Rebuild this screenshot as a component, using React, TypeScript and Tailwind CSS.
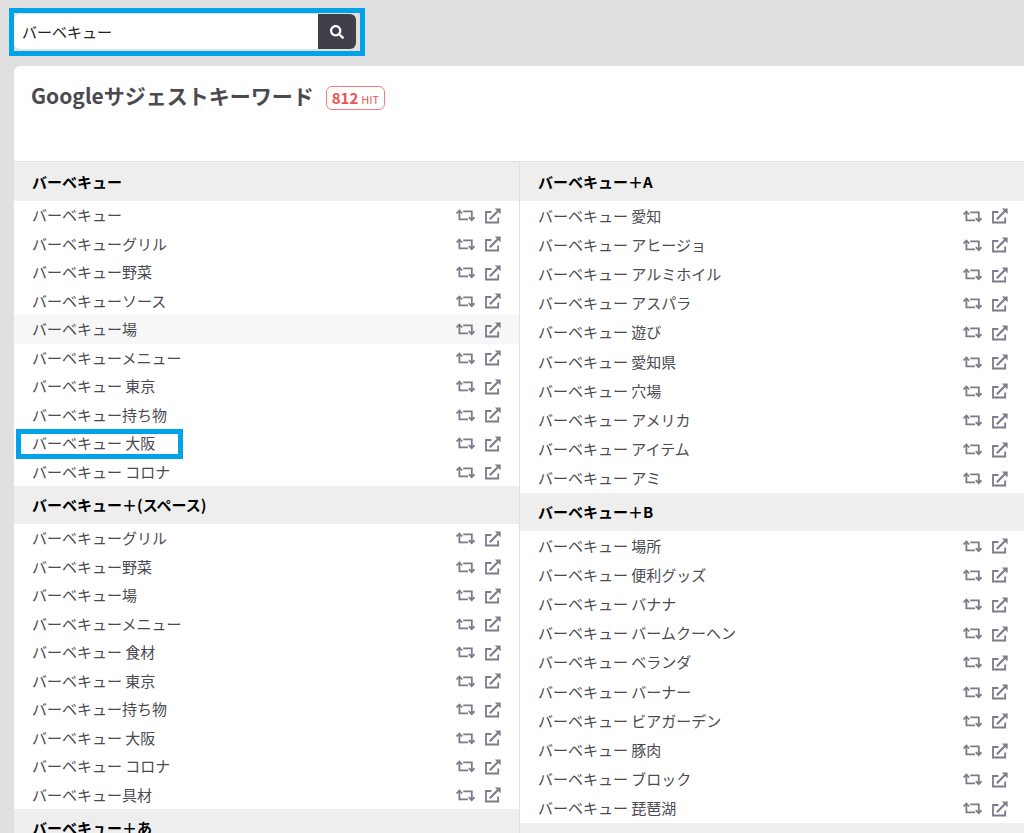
import React from 'react';
import clsx from 'clsx';
import { FaSearch } from 'react-icons/fa';

interface KeywordGroup {
  title: string;
  items: string[];
  hovered?: number;
  marked?: number;
}

const leftGroups: KeywordGroup[] = [
  {
    title: 'バーベキュー',
    items: [
      'バーベキュー',
      'バーベキューグリル',
      'バーベキュー野菜',
      'バーベキューソース',
      'バーベキュー場',
      'バーベキューメニュー',
      'バーベキュー 東京',
      'バーベキュー持ち物',
      'バーベキュー 大阪',
      'バーベキュー コロナ',
    ],
    hovered: 4,
    marked: 8,
  },
  {
    title: 'バーベキュー＋(スペース)',
    items: [
      'バーベキューグリル',
      'バーベキュー野菜',
      'バーベキュー場',
      'バーベキューメニュー',
      'バーベキュー 食材',
      'バーベキュー 東京',
      'バーベキュー持ち物',
      'バーベキュー 大阪',
      'バーベキュー コロナ',
      'バーベキュー具材',
    ],
  },
  { title: 'バーベキュー＋あ', items: [] },
];

const rightGroups: KeywordGroup[] = [
  {
    title: 'バーベキュー＋A',
    items: [
      'バーベキュー 愛知',
      'バーベキュー アヒージョ',
      'バーベキュー アルミホイル',
      'バーベキュー アスパラ',
      'バーベキュー 遊び',
      'バーベキュー 愛知県',
      'バーベキュー 穴場',
      'バーベキュー アメリカ',
      'バーベキュー アイテム',
      'バーベキュー アミ',
    ],
  },
  {
    title: 'バーベキュー＋B',
    items: [
      'バーベキュー 場所',
      'バーベキュー 便利グッズ',
      'バーベキュー バナナ',
      'バーベキュー バームクーヘン',
      'バーベキュー ベランダ',
      'バーベキュー バーナー',
      'バーベキュー ビアガーデン',
      'バーベキュー 豚肉',
      'バーベキュー ブロック',
      'バーベキュー 琵琶湖',
    ],
  },
  { title: '', items: [] },
];

const RepeatIcon: React.FC = () => (
  <svg width="19" height="13" viewBox="0 0 19 13" fill="none" stroke="currentColor" strokeWidth="1.8">
    <path d="M0.6 4.5 3.4 1.5 6.2 4.5" />
    <path d="M3.4 2v8.3h8.6" />
    <path d="M7.2 2.4h8.6v8.3" />
    <path d="M12.8 8.2 15.7 11.2 18.5 8.2" />
  </svg>
);

const OpenIcon: React.FC = () => (
  <svg width="16" height="16" viewBox="0 0 16 16" fill="none" stroke="currentColor" strokeWidth="1.8">
    <path d="M6.4 4H1v10.5h12.2V9.5" />
    <path d="M4.8 11.2 13.5 2.5" strokeWidth="2.1" />
    <path d="M9.8 0.4h5.8v5.8z" fill="currentColor" stroke="none" />
  </svg>
);

const KeywordRow: React.FC<{ keyword: string; hovered: boolean; marked: boolean }> = ({
  keyword,
  hovered,
  marked,
}) => (
  <li
    className={clsx(
      'relative flex flex-1 items-center justify-between px-[18px] text-[15px] leading-6',
      hovered && 'bg-[#f7f7f7]'
    )}
  >
    <span>{keyword}</span>
    <span className="flex items-center gap-[10px] pt-px text-[#7d7b8a]">
      <button type="button" aria-label={`${keyword} 再検索`}>
        <RepeatIcon />
      </button>
      <a href="#open" aria-label={`${keyword} を開く`}>
        <OpenIcon />
      </a>
    </span>
    {marked && (
      <span className="pointer-events-none absolute left-[2px] top-0 h-[30px] w-[167px] border-[5px] border-[#00a2e8]" />
    )}
  </li>
);

const KeywordColumn: React.FC<{ groups: KeywordGroup[]; listClass: string }> = ({ groups, listClass }) => (
  <div className="min-w-0">
    {groups.map((group, g) => (
      <section key={group.title}>
        <h2
          className={clsx(
            'bg-[#eee] px-[18px] text-[15px] font-bold text-black',
            g === 0 ? 'h-[39px] leading-[39px]' : 'h-[38px] leading-[38px]'
          )}
        >
          {group.title}
        </h2>
        {group.items.length > 0 && (
          <ul className={clsx('flex flex-col', listClass)}>
            {group.items.map((item, i) => (
              <KeywordRow
                key={item}
                keyword={item}
                hovered={group.hovered === i}
                marked={group.marked === i}
              />
            ))}
          </ul>
        )}
      </section>
    ))}
  </div>
);

const App: React.FC = () => {
  return (
    <div className="h-screen overflow-hidden bg-[#e0e0e0] font-['Noto_Sans_CJK_JP',sans-serif] text-[#4a4a50]">
      {/* Search */}
      <header className="pl-[9px] pt-2">
        <form className="flex w-[356px] max-w-full border-[5px] border-[#00a2e8] pb-[2px] pr-1 pt-px">
          <input
            type="text"
            aria-label="キーワード"
            defaultValue="バーベキュー"
            className="h-[35px] min-w-0 flex-1 rounded-l-md bg-white px-2 text-[15px] text-[#222] outline-none"
          />
          <button
            type="button"
            aria-label="検索"
            className="flex h-[35px] w-[38px] items-center justify-center rounded-r-md bg-[#41404a] text-white"
          >
            <FaSearch size={14} />
          </button>
        </form>
      </header>

      {/* Results */}
      <main className="-mr-[2px] ml-[14px] mt-[10px] rounded-tl-md bg-white">
        <div className="flex h-[95px] items-start gap-3 px-[17px] pt-[14px]">
          <h1 className="text-[21px] font-bold leading-[30px]">Googleサジェストキーワード</h1>
          <p className="mt-[6px] flex h-6 items-center gap-[3px] rounded-md border border-[#ef7f7f] px-[5px] text-[#ea5455]">
            <span className="text-[15px] font-bold leading-5">812</span>
            <span className="pt-[2px] text-[11px] leading-5">HIT</span>
          </p>
        </div>

        <div className="grid grid-cols-2 divide-x divide-[#e0e0e0] border-t border-[#e0e0e0]">
          <KeywordColumn groups={leftGroups} listClass="min-h-[285px]" />
          <KeywordColumn groups={rightGroups} listClass="min-h-[292px]" />
        </div>
      </main>
    </div>
  );
};

export default App;
